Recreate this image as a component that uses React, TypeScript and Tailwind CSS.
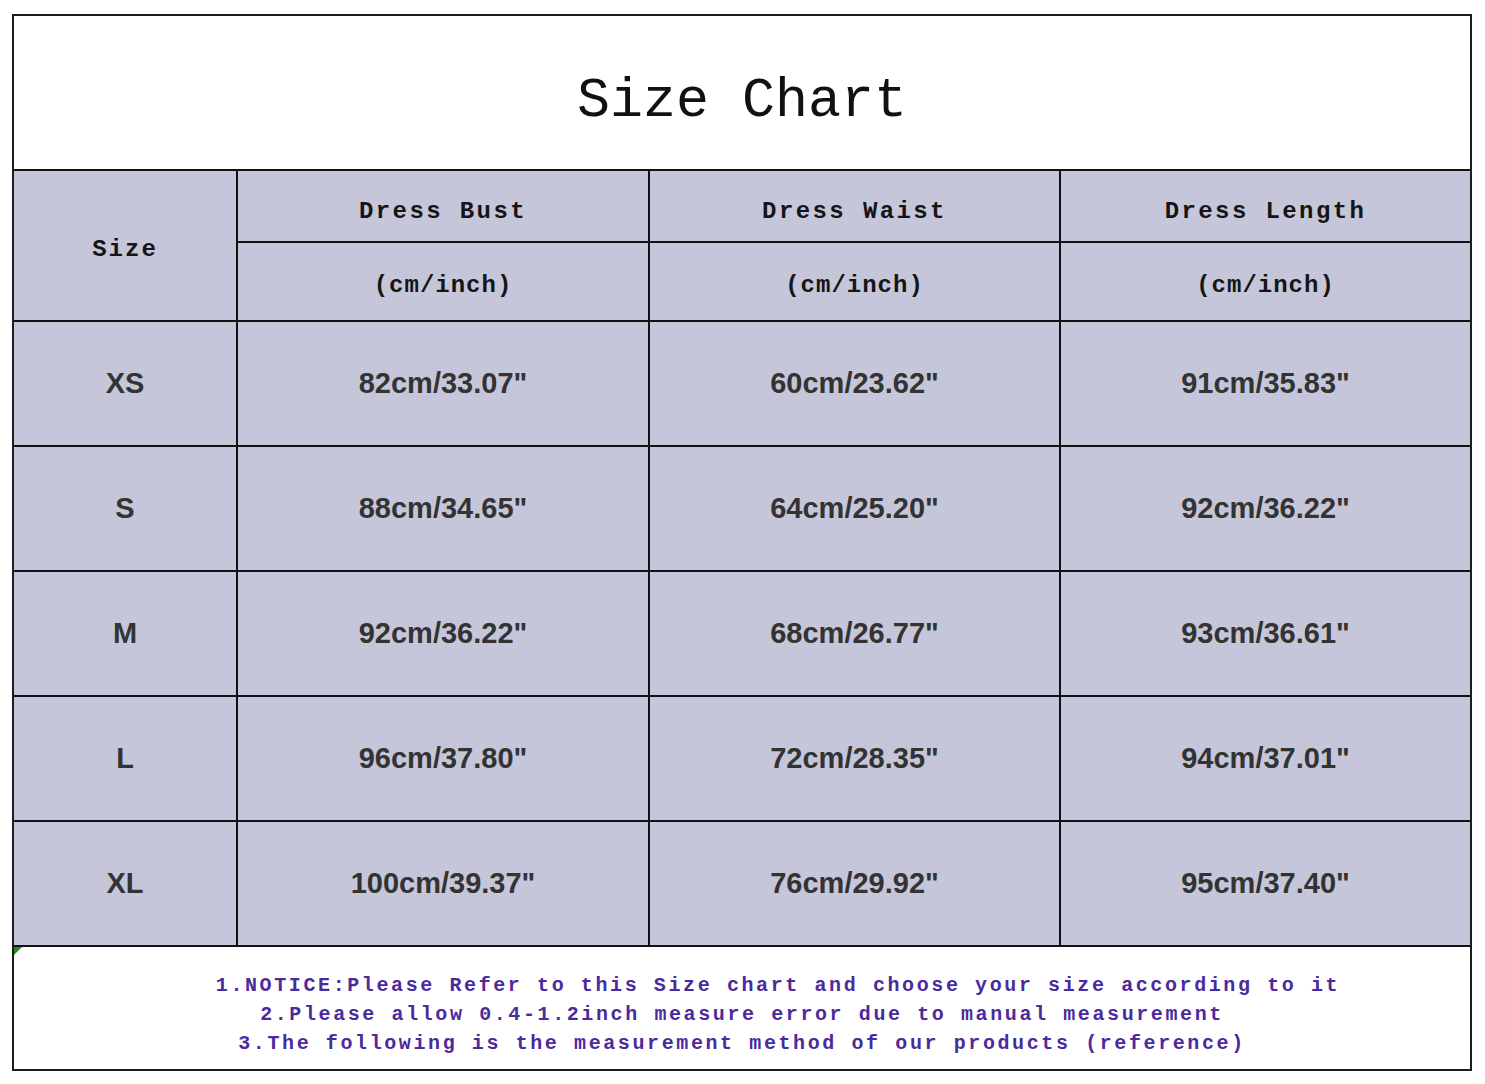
const rows = [
  ["XS", "82cm/33.07\"", "60cm/23.62\"", "91cm/35.83\""],
  ["S", "88cm/34.65\"", "64cm/25.20\"", "92cm/36.22\""],
  ["M", "92cm/36.22\"", "68cm/26.77\"", "93cm/36.61\""],
  ["L", "96cm/37.80\"", "72cm/28.35\"", "94cm/37.01\""],
  ["XL", "100cm/39.37\"", "76cm/29.92\"", "95cm/37.40\""],
];

const heads = ["Dress Bust", "Dress Waist", "Dress Length"];

const mono = "font-['Liberation_Mono',monospace]";
const sans = "font-['Liberation_Sans',Arial,sans-serif]";

export default function App() {
  return (
    <main className="min-h-screen w-[1485px] h-[1084px] bg-white pt-[14px] pl-[12px]">
      <div className="w-[1460px] border-2 border-[#1c1c1c] relative">
        <div className={`h-[153px] flex items-center justify-center pt-[20px] text-[55px] text-[#111] ${mono}`}>
          Size Chart
        </div>

        <div className="grid grid-cols-[222px_410px_409px_409px] grid-rows-[70px_77px_repeat(5,123px)] gap-[2px] bg-[#111] border-y-2 border-[#111]">
          <div className={`row-span-2 bg-[#c6c6da] flex items-center justify-center pt-[8px] text-[24px] font-bold tracking-[2px] text-[#151515] ${mono}`}>
            Size
          </div>
          {heads.map((h) => (
            <div
              key={h}
              className={`bg-[#c6c6da] flex items-center justify-center pt-[12px] text-[24px] font-bold tracking-[2.4px] text-[#151515] ${mono}`}
            >
              {h}
            </div>
          ))}
          {heads.map((h) => (
            <div
              key={h + "-unit"}
              className={`bg-[#c6c6da] flex items-center justify-center pt-[8px] text-[24px] font-bold tracking-[1px] text-[#151515] ${mono}`}
            >
              (cm/inch)
            </div>
          ))}
          {rows.map((r) =>
            r.map((c, i) => (
              <div
                key={r[0] + i}
                className={`bg-[#c6c6da] flex items-center justify-center text-[29px] font-bold text-[#333] ${sans}`}
              >
                {c}
              </div>
            ))
          )}
        </div>

        <span className="absolute left-0 top-[931px] w-0 h-0 border-t-[8px] border-t-[#2a8a2a] border-r-[8px] border-r-transparent" />

        <div className={`h-[122px] flex flex-col items-center pt-[24px] text-[20px] font-bold leading-[29px] tracking-[2.6px] text-[#4b2a9e] ${mono}`}>
          <p className="pl-[72px]">1.NOTICE:Please Refer to this Size chart and choose your size according to it</p>
          <p>2.Please allow 0.4-1.2inch measure error due to manual measurement</p>
          <p>3.The following is the measurement method of our products (reference)</p>
        </div>
      </div>
    </main>
  );
}
